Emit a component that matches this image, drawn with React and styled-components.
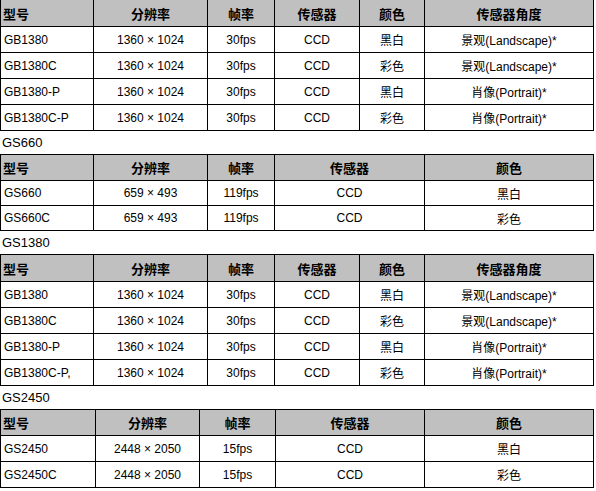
import React from 'react';
import styled, { createGlobalStyle } from 'styled-components';

const GlobalStyle = createGlobalStyle`
  body {
    margin: 0;
    background: #fff;
    font-family: "Liberation Sans", Arial, "Noto Sans CJK SC", sans-serif;
    font-size: 12px;
    color: #000;
  }
`;

const Page = styled.div`
  width: 594px;
  margin-top: -1px;
`;

const Table = styled.table`
  width: 594px;
  border-collapse: collapse;
  table-layout: fixed;
`;

const HeadCell = styled.th`
  height: ${(p) => p.$h}px;
  padding: 0 2px;
  background: #c0c0c0;
  border: 1px solid #000;
  font-weight: bold;
  font-size: 13px;
  font-family: "Noto Sans CJK SC", "Liberation Sans", sans-serif;
  text-align: ${(p) => (p.$left ? 'left' : 'center')};
`;

const Cell = styled.td`
  height: ${(p) => p.$h}px;
  padding: 0 ${(p) => (p.$left ? '3px' : '2px')};
  border: 1px solid #000;
  white-space: nowrap;
  text-align: ${(p) => (p.$left ? 'left' : 'center')};
`;

const Label = styled.div`
  height: 23px;
  line-height: 23px;
  padding-left: 2px;
  font-size: 13px;
`;

const headers6 = ['型号', '分辨率', '帧率', '传感器', '颜色', '传感器角度'];
const headers5 = ['型号', '分辨率', '帧率', '传感器', '颜色'];

const gb1380 = [
  ['GB1380', '1360 × 1024', '30fps', 'CCD', '黑白', '景观(Landscape)*'],
  ['GB1380C', '1360 × 1024', '30fps', 'CCD', '彩色', '景观(Landscape)*'],
  ['GB1380-P', '1360 × 1024', '30fps', 'CCD', '黑白', '肖像(Portrait)*'],
  ['GB1380C-P', '1360 × 1024', '30fps', 'CCD', '彩色', '肖像(Portrait)*'],
];

const gs1380 = gb1380.map((r, i) => (i === 3 ? ['GB1380C-P,', ...r.slice(1)] : r));

const gs660 = [
  ['GS660', '659 × 493', '119fps', 'CCD', '黑白'],
  ['GS660C', '659 × 493', '119fps', 'CCD', '彩色'],
];

const gs2450 = [
  ['GS2450', '2448 × 2050', '15fps', 'CCD', '黑白'],
  ['GS2450C', '2448 × 2050', '15fps', 'CCD', '彩色'],
];

const SpecTable = ({ cols, headers, rows, headH = 26, rowH = 25 }) => (
  <Table>
    <colgroup>
      {cols.map((w, i) => (
        <col key={i} style={{ width: w }} />
      ))}
    </colgroup>
    <thead>
      <tr>
        {headers.map((h, i) => (
          <HeadCell key={h} $left={i === 0} $h={headH}>
            {h}
          </HeadCell>
        ))}
      </tr>
    </thead>
    <tbody>
      {rows.map((r) => (
        <tr key={r[0]}>
          {r.map((c, i) => (
            <Cell key={i} $left={i === 0} $h={rowH}>
              {c}
            </Cell>
          ))}
        </tr>
      ))}
    </tbody>
  </Table>
);

const App = () => {
  return (
    <>
      <GlobalStyle />
      <Page>
        <SpecTable cols={[93, 114, 67, 85, 65, 169]} headers={headers6} rows={gb1380} />
        <Label>GS660</Label>
        <SpecTable
          cols={[93, 114, 67, 150, 169]}
          headers={headers5}
          rows={gs660}
          headH={25}
          rowH={24}
        />
        <Label>GS1380</Label>
        <SpecTable cols={[93, 114, 67, 85, 65, 169]} headers={headers6} rows={gs1380} />
        <Label>GS2450</Label>
        <SpecTable cols={[95, 104, 76, 149, 169]} headers={headers5} rows={gs2450} headH={25} />
      </Page>
    </>
  );
};

export default App;
